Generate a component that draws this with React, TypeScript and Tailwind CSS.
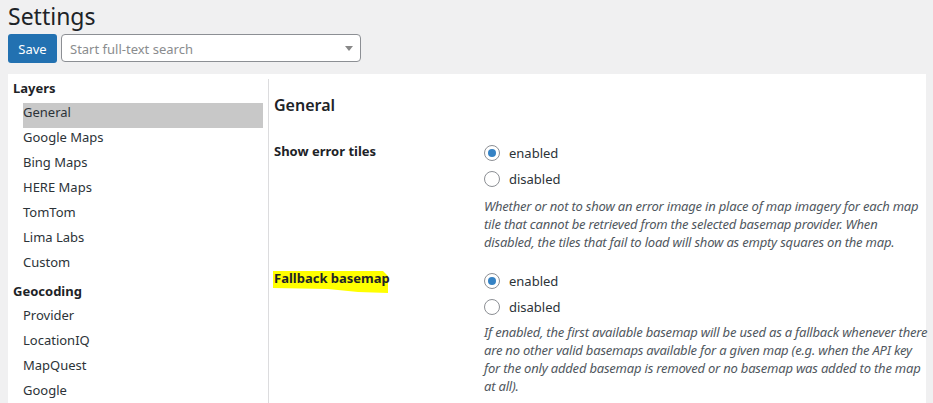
import React from "react";

const layers = ["General", "Google Maps", "Bing Maps", "HERE Maps", "TomTom", "Lima Labs", "Custom"];
const geocoding = ["Provider", "LocationIQ", "MapQuest", "Google"];

function Radio({ checked, label }: { checked?: boolean; label: string }) {
  return (
    <label className="flex h-[18px] items-center gap-[9px]">
      <span className="flex h-4 w-4 items-center justify-center rounded-full border border-[#8c8f94] bg-white">
        {checked && <span className="h-2 w-2 rounded-full bg-[#3582c4]" />}
      </span>
      <span className="leading-[18px]">{label}</span>
    </label>
  );
}

function NavItem({ label, active }: { label: string; active?: boolean }) {
  return (
    <div className={"ml-[10px] mr-[5px] h-[25px] leading-[18px] " + (active ? "bg-[#c8c8c8]" : "")}>
      {label}
    </div>
  );
}

function Desc({ lines, mt }: { lines: string[]; mt: string }) {
  return (
    <p className={mt + " whitespace-nowrap italic leading-[18px] tracking-[-0.2px] text-[#50575e]"}>
      {lines.map((l) => (
        <span key={l} className="block">
          {l}
        </span>
      ))}
    </p>
  );
}

export default function App() {
  return (
    <div className="min-h-screen bg-[#f0f0f1] pl-2 pr-[7px] font-['Noto_Sans',sans-serif] text-[13px] text-[#2c3338]">
      <h1 className="pt-[2px] text-[23px] leading-[29px] text-[#1d2327]">Settings</h1>

      <div className="mt-[3px] flex items-start gap-1">
        <button className="h-[29px] w-[49px] rounded-[3px] bg-[#2271b1] pt-[2px] text-center leading-[27px] text-white">
          Save
        </button>
        <div className="flex h-[28px] w-[300px] items-center justify-between rounded-[4px] border border-[#8c8f94] bg-white pl-2 pr-[7px]">
          <span className="pt-[3px] text-[#8a8c8e]">Start full-text search</span>
          <span className="mt-[1px] h-0 w-0 border-x-[4px] border-t-[5px] border-x-transparent border-t-[#888888]" />
        </div>
      </div>

      <div className="mt-[11px] flex bg-white pt-[5px]">
        <aside className="w-[261px] shrink-0 border-r border-[#dcdcde] pb-4 pl-[5px]">
          <div className="h-[24px] font-bold leading-[18px] text-[#1d2327]">Layers</div>
          {layers.map((l, i) => (
            <NavItem key={l} label={l} active={i === 0} />
          ))}
          <div className="mt-[4px] h-[24px] font-bold leading-[18px] text-[#1d2327]">Geocoding</div>
          {geocoding.map((l) => (
            <NavItem key={l} label={l} />
          ))}
        </aside>

        <main className="flex-1 pl-[5px]">
          <h2 className="mt-[14px] text-[16px] font-semibold leading-[24px] text-[#1d2327]">General</h2>

          <div className="mt-[25px] flex">
            <div className="w-[210px] shrink-0 font-bold leading-[18px] text-[#1d2327]">Show error tiles</div>
            <div className="pt-[2px]">
              <Radio checked label="enabled" />
              <div className="mt-[8px]">
                <Radio label="disabled" />
              </div>
              <Desc
                mt="mt-[9px]"
                lines={[
                  "Whether or not to show an error image in place of map imagery for each map",
                  "tile that cannot be retrieved from the selected basemap provider. When",
                  "disabled, the tiles that fail to load will show as empty squares on the map.",
                ]}
              />
            </div>
          </div>

          <div className="mt-[18px] flex">
            <div className="relative w-[210px] shrink-0 font-bold leading-[18px] text-[#1d2327]">
              <svg className="absolute left-[-1px] top-[2px]" width="118" height="24" viewBox="0 0 118 24">
                <polygon points="0,0 110,0 115,5 115,22 85,21 55,18 0,17" fill="#ffff00" />
              </svg>
              <span className="relative">Fallback basemap</span>
            </div>
            <div className="pt-[3px]">
              <Radio checked label="enabled" />
              <div className="mt-[8px]">
                <Radio label="disabled" />
              </div>
              <Desc
                mt="mt-[7px]"
                lines={[
                  "If enabled, the first available basemap will be used as a fallback whenever there",
                  "are no other valid basemaps available for a given map (e.g. when the API key",
                  "for the only added basemap is removed or no basemap was added to the map",
                  "at all).",
                ]}
              />
            </div>
          </div>
        </main>
      </div>
    </div>
  );
}
